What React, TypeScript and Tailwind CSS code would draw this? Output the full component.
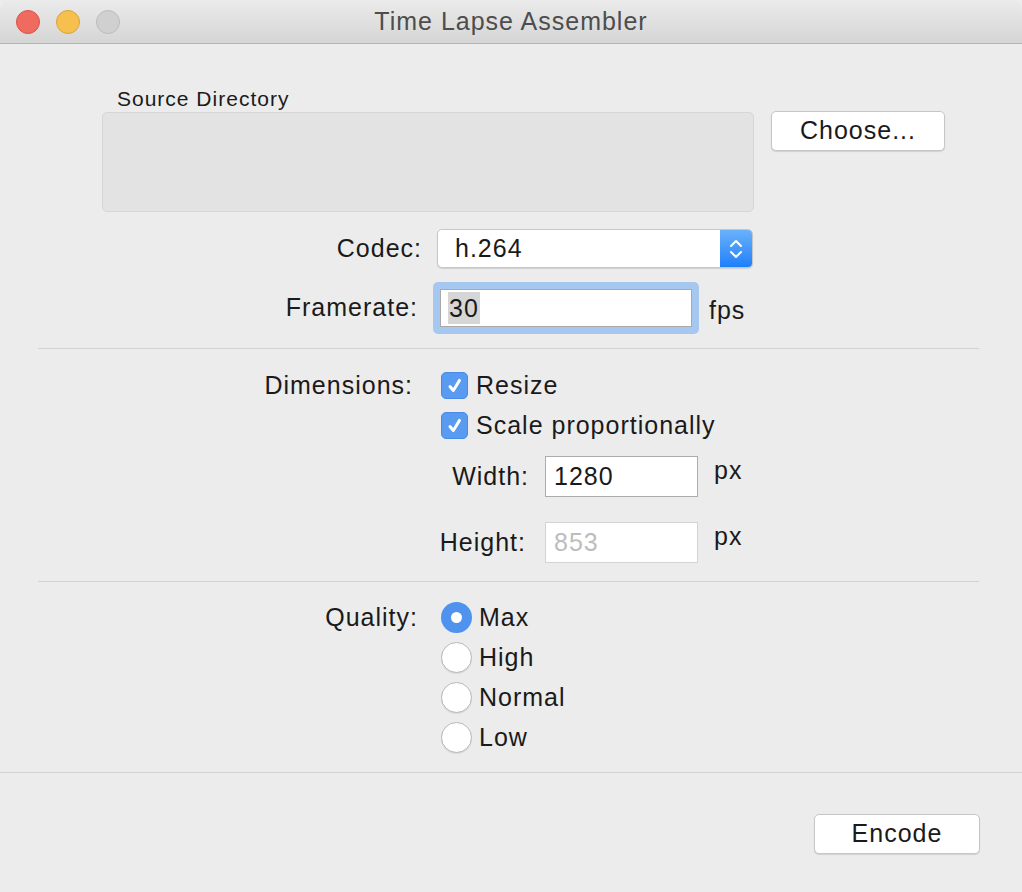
import React from 'react';

const font = { fontFamily: '"Liberation Sans", Arial, sans-serif' };

function Check() {
    return (
        <div className="w-[27px] h-[27px] rounded-[5px] bg-[#5a9bf2] border border-[#4a8ae6] flex items-center justify-center">
            <svg width="18" height="18" viewBox="0 0 16 16" fill="none" stroke="white" strokeWidth="2.6" strokeLinecap="round" strokeLinejoin="round">
                <path d="M3.5 8.5l3 3.5 5.5-9" />
            </svg>
        </div>
    );
}

function Radio({ on }: { on?: boolean }) {
    return on ? (
        <div className="w-[31px] h-[31px] rounded-full bg-[#4f93ee] flex items-center justify-center">
            <div className="w-[11px] h-[11px] rounded-full bg-white" />
        </div>
    ) : (
        <div className="w-[31px] h-[31px] rounded-full bg-white border border-[#b8b8b8] shadow-[0_1px_1px_rgba(0,0,0,0.08)]" />
    );
}

export default function App() {
    const qualities = ['Max', 'High', 'Normal', 'Low'];
    return (
        <div className="w-[1022px] h-[892px] bg-[#ececec] text-[25px] tracking-[0.04em] text-[#1a1a1a] overflow-hidden" style={font}>
            {/* title bar */}
            <div className="relative h-[44px] bg-gradient-to-b from-[#ebebeb] to-[#d5d5d5] border-b border-[#b3b3b3] flex items-center justify-center rounded-t-[10px]">
                <div className="absolute left-[16px] top-[10px] flex gap-[16px]">
                    <div className="w-[24px] h-[24px] rounded-full bg-[#ef6b60] border border-[#d9534a]" />
                    <div className="w-[24px] h-[24px] rounded-full bg-[#f6c04f] border border-[#dea236]" />
                    <div className="w-[24px] h-[24px] rounded-full bg-[#d0d0d0] border border-[#bcbcbc]" />
                </div>
                <span className="text-[#4d4d4d] text-[25px]">Time Lapse Assembler</span>
            </div>

            {/* source directory */}
            <div className="flex mt-[42px]">
                <div className="ml-[102px] w-[652px]">
                    <div className="pl-[15px] h-[26px] leading-[26px] text-[21px]">Source Directory</div>
                    <div className="h-[100px] rounded-[5px] bg-[#e3e3e3] border border-[#d6d6d6]" />
                </div>
                <div className="ml-[17px] mt-[25px] w-[174px] h-[40px] rounded-[5px] bg-white border border-[#c6c6c6] shadow-[0_1px_1px_rgba(0,0,0,0.12)] flex items-center justify-center">
                    Choose...
                </div>
            </div>

            {/* codec */}
            <div className="flex items-center mt-[17px] h-[39px]">
                <div className="w-[422px] text-right">Codec:</div>
                <div className="ml-[15px] w-[316px] h-[39px] rounded-[5px] bg-white border border-[#c6c6c6] shadow-[0_1px_1px_rgba(0,0,0,0.12)] flex overflow-hidden">
                    <div className="flex-1 pl-[17px] flex items-center">h.264</div>
                    <div className="w-[32px] bg-gradient-to-b from-[#69b1fa] to-[#1b7ffa] flex items-center justify-center">
                        <svg width="16" height="26" viewBox="0 0 16 26" fill="none" stroke="white" strokeWidth="2" strokeLinecap="round" strokeLinejoin="round">
                            <path d="M3 10l5-5 5 5" />
                            <path d="M3 16l5 5 5-5" />
                        </svg>
                    </div>
                </div>
            </div>

            {/* framerate */}
            <div className="flex items-center mt-[14px] h-[52px]">
                <div className="w-[418px] text-right">Framerate:</div>
                <div className="ml-[15px] w-[266px] h-[52px] rounded-[5px] bg-[#a6c8f0] p-[7px]">
                    <div className="h-full bg-white border border-[#a9a9a9] flex items-center pl-[7px]">
                        <span className="bg-[#d6d6d6] px-[1px] leading-[32px]">30</span>
                    </div>
                </div>
                <div className="ml-[10px] mt-[6px]">fps</div>
            </div>

            <div className="mt-[14px] ml-[38px] mr-[43px] h-px bg-[#d2d2d2]" />

            {/* dimensions */}
            <div className="flex items-center mt-[23px] h-[27px]">
                <div className="w-[413px] text-right">Dimensions:</div>
                <div className="ml-[28px]"><Check /></div>
                <div className="ml-[8px]">Resize</div>
            </div>
            <div className="flex items-center mt-[13px] h-[27px]">
                <div className="ml-[441px]"><Check /></div>
                <div className="ml-[8px]">Scale proportionally</div>
            </div>

            <div className="flex items-center mt-[17px] h-[41px]">
                <div className="w-[529px] text-right">Width:</div>
                <div className="ml-[16px] w-[153px] h-[41px] bg-white border border-[#acacac] flex items-center pl-[8px]">1280</div>
                <div className="ml-[16px] self-start -mt-[4px]">px</div>
            </div>
            <div className="flex items-center mt-[25px] h-[41px]">
                <div className="w-[526px] text-right">Height:</div>
                <div className="ml-[19px] w-[153px] h-[41px] bg-white border border-[#d3d3d3] flex items-center pl-[8px] text-[#bdbdbd]">853</div>
                <div className="ml-[16px] self-start -mt-[4px]">px</div>
            </div>

            <div className="mt-[18px] ml-[38px] mr-[43px] h-px bg-[#d2d2d2]" />

            {/* quality */}
            <div className="flex mt-[20px]">
                <div className="w-[418px] text-right leading-[31px]">Quality:</div>
                <div className="ml-[23px] flex flex-col gap-[9px]">
                    {qualities.map((q, i) => (
                        <div key={q} className="flex items-center h-[31px]">
                            <Radio on={i === 0} />
                            <span className="ml-[7px]">{q}</span>
                        </div>
                    ))}
                </div>
            </div>

            <div className="mt-[19px] h-px bg-[#d2d2d2]" />

            <div className="flex justify-end mt-[41px] pr-[42px]">
                <div className="w-[166px] h-[40px] rounded-[5px] bg-white border border-[#c6c6c6] shadow-[0_1px_1px_rgba(0,0,0,0.12)] flex items-center justify-center">
                    Encode
                </div>
            </div>
        </div>
    );
}
